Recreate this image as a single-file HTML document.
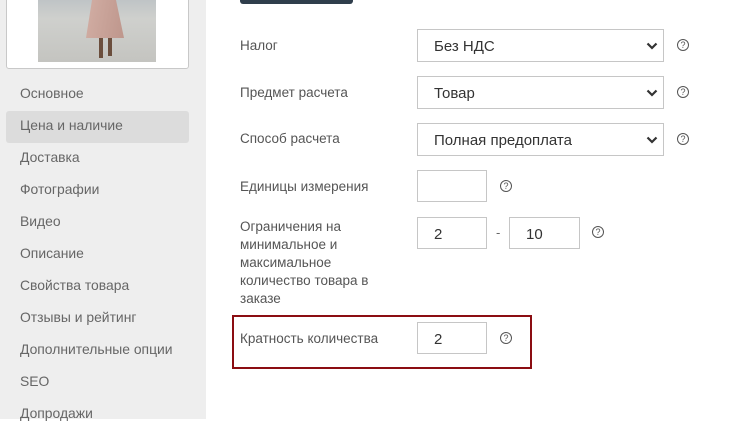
<!DOCTYPE html>
<html><head><meta charset="utf-8"><style>
*{margin:0;padding:0;box-sizing:border-box}
body{width:740px;height:419px;overflow:hidden;background:#fff;font-family:"Liberation Sans",sans-serif;color:#555;font-size:13px;position:relative}
.side{position:absolute;left:0;top:0;width:206px;height:419px;background:#eeeeee}
.card{position:absolute;left:6px;top:-4px;width:183px;height:73px;background:#fff;border:1px solid #c8c8c8;border-radius:3px}
.photo{position:absolute;left:31px;top:3px;width:118px;height:62px;background:linear-gradient(#bfc4c6,#cfd0cd 30%,#c4c4c0)}
.nav{position:absolute;left:20px;font-size:13.9px;color:#666}
.act{position:absolute;left:6px;top:111px;width:183px;height:32px;background:#dcdcdc;border-radius:3px}
.lbl{position:absolute;left:240px;font-size:13.5px;color:#555;line-height:18px}
.sel,.inp{position:absolute;border:1px solid #c6c6c6;background:#fff;font-size:15px;color:#333;padding-left:16px;line-height:33px}
.sel{left:417px;width:247px;height:33px}
.chev{position:absolute;right:5px;top:12px;width:12px;height:8px}
.q{position:absolute;width:12px;height:12px;border:1px solid #555;border-radius:50%;font-size:9px;line-height:10px;text-align:center;color:#555}
</style></head><body>
<div class="side">
<div class="card"><div class="photo">
<div style="position:absolute;left:48px;top:0;width:40px;height:38px;background:linear-gradient(100deg,#d2aea4,#bd958b);clip-path:polygon(15% 0,75% 0,95% 100%,0 100%)"></div>
<div style="position:absolute;left:61px;top:38px;width:4px;height:20px;background:#6b4e3d"></div>
<div style="position:absolute;left:70px;top:38px;width:4px;height:18px;background:#6b4e3d"></div>
</div></div>
<div class="act"></div>
<div class="nav" style="top:85px">Основное</div>
<div class="nav" style="top:117px">Цена и наличие</div>
<div class="nav" style="top:149px">Доставка</div>
<div class="nav" style="top:181px">Фотографии</div>
<div class="nav" style="top:213px">Видео</div>
<div class="nav" style="top:245px">Описание</div>
<div class="nav" style="top:277px">Свойства товара</div>
<div class="nav" style="top:309px">Отзывы и рейтинг</div>
<div class="nav" style="top:341px">Дополнительные опции</div>
<div class="nav" style="top:373px">SEO</div>
<div class="nav" style="top:405px">Допродажи</div>
</div>
<div style="position:absolute;left:240px;top:-4px;width:113px;height:8px;background:#2f3e4c;border-radius:3px"></div>

<div class="lbl" style="top:37px">Налог</div>
<div class="sel" style="top:29px">Без НДС<svg class="chev" viewBox="0 0 12 8"><path d="M1.5 1.5L6 6l4.5-4.5" stroke="#333" stroke-width="2.2" fill="none"/></svg></div>
<div class="q" style="left:677px;top:39px">?</div>

<div class="lbl" style="top:84px">Предмет расчета</div>
<div class="sel" style="top:76px">Товар<svg class="chev" viewBox="0 0 12 8"><path d="M1.5 1.5L6 6l4.5-4.5" stroke="#333" stroke-width="2.2" fill="none"/></svg></div>
<div class="q" style="left:677px;top:86px">?</div>

<div class="lbl" style="top:130px">Способ расчета</div>
<div class="sel" style="top:123px">Полная предоплата<svg class="chev" viewBox="0 0 12 8"><path d="M1.5 1.5L6 6l4.5-4.5" stroke="#333" stroke-width="2.2" fill="none"/></svg></div>
<div class="q" style="left:677px;top:133px">?</div>

<div class="lbl" style="top:178px">Единицы измерения</div>
<div class="inp" style="left:417px;top:170px;width:70px;height:32px"></div>
<div class="q" style="left:500px;top:180px">?</div>

<div class="lbl" style="top:218px">Ограничения на<br>минимальное и<br>максимальное<br>количество товара в<br>заказе</div>
<div class="inp" style="left:417px;top:217px;width:70px;height:32px">2</div>
<div style="position:absolute;left:496px;top:225px;color:#666">-</div>
<div class="inp" style="left:509px;top:217px;width:71px;height:32px">10</div>
<div class="q" style="left:592px;top:226px">?</div>

<div style="position:absolute;left:232px;top:315px;width:300px;height:54px;border:2px solid #8b0d12"></div>
<div class="lbl" style="top:330px">Кратность количества</div>
<div class="inp" style="left:417px;top:322px;width:70px;height:32px">2</div>
<div class="q" style="left:500px;top:332px">?</div>
</body></html>
